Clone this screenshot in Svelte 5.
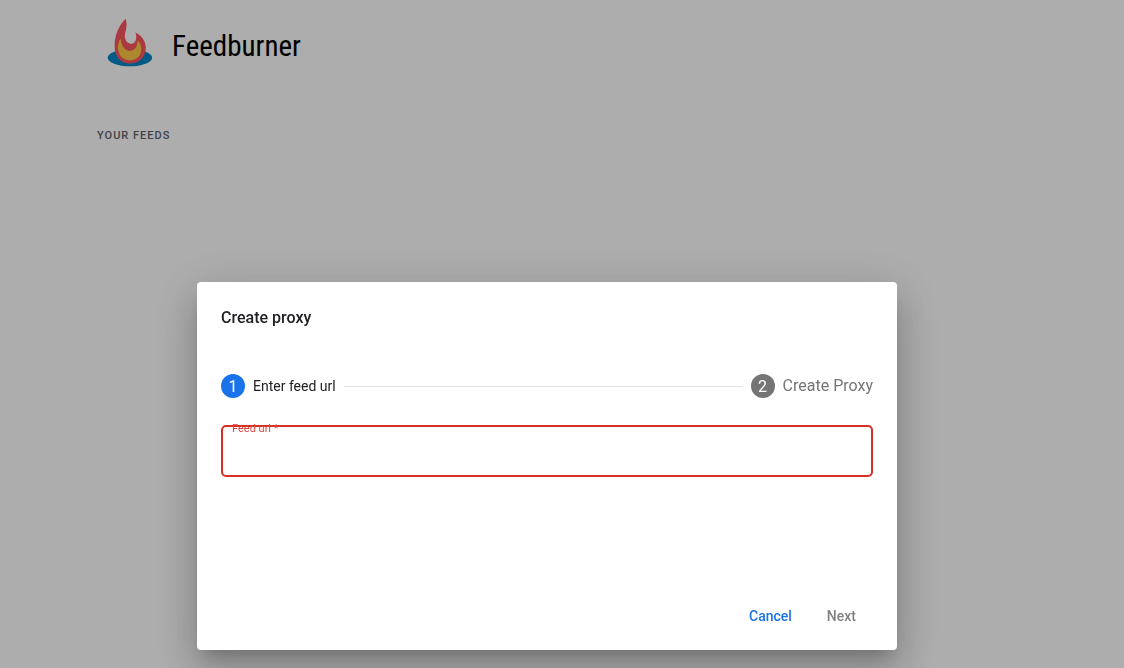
<script>
  let feedUrl = $state('');
  const steps = ['Enter feed url', 'Create Proxy'];
</script>

<div class="page">
  <header>
    <svg class="logo" viewBox="0 0 48 52" aria-hidden="true">
      <ellipse cx="23.9" cy="41.8" rx="22.2" ry="8.5" fill="#0086c8" />
      <path
        d="M19.7 2.8C13 9 8.6 19 8.6 30C8.6 41 15 47.6 24 47.6C33 47.6 39.8 41 39.8 32C39.8 26 37 20 29.4 16.4C31.4 22 30 27.8 24.6 27.8C20 27 17.6 22 19.4 16C21 11 20.8 7 19.7 2.8Z"
        fill="#fc5560"
      />
      <path
        d="M14.7 22.6C11.4 27 10.8 34 14.3 39.5C19 46 29 46 33.5 39.5C36.4 35 35.9 28 31.7 24.6C31.7 30.6 28.5 34.9 23.6 34.9C18.4 34.9 14.9 29 14.7 22.6Z"
        fill="#ffc648"
      />
    </svg>
    <h1>Feedburner</h1>
  </header>
  <main>
    <h2>Your feeds</h2>
  </main>
</div>

<div class="overlay">
  <form class="dialog" role="dialog" aria-modal="true" aria-labelledby="dialog-title">
    <h3 id="dialog-title">Create proxy</h3>
    <ol class="stepper">
      {#each steps as step, i}
        {#if i > 0}<li class="line" aria-hidden="true"></li>{/if}
        <li class="step" class:active={i === 0}>
          <span class="badge">{i + 1}</span>
          <span class="name">{step}</span>
        </li>
      {/each}
    </ol>
    <div class="field">
      <input id="feed-url" type="text" bind:value={feedUrl} required />
      <label for="feed-url">Feed url *</label>
    </div>
    <div class="actions">
      <button type="button" class="cancel">Cancel</button>
      <button type="button" disabled>Next</button>
    </div>
  </form>
</div>

<style>
  :global(body) {
    background: #fff;
    font-family: Roboto, sans-serif;
  }

  .page {
    padding: 16px 96px;
  }

  header {
    display: flex;
    align-items: flex-start;
    gap: 18px;
    padding-left: 10px;
  }

  .logo {
    width: 48px;
    height: 52px;
  }

  h1 {
    margin: 0;
    font: 400 29px/60px "Roboto Condensed", "Open Sans Condensed", Roboto, sans-serif;
    color: #000;
  }

  h2 {
    margin: 52px 0 0 1px;
    font-size: 11px;
    font-weight: 500;
    line-height: 16px;
    letter-spacing: 1px;
    text-transform: uppercase;
    color: #5f6368;
  }

  .overlay {
    position: fixed;
    inset: 0;
    display: flex;
    justify-content: center;
    align-items: flex-end;
    padding: 18px 30px 18px 0;
    background: rgba(0, 0, 0, 0.32);
  }

  .dialog {
    box-sizing: border-box;
    width: 100%;
    max-width: 700px;
    padding: 24px 24px 8px;
    border-radius: 4px;
    background: #fff;
    box-shadow:
      0 11px 15px -7px rgba(0, 0, 0, 0.2),
      0 24px 38px 3px rgba(0, 0, 0, 0.14),
      0 9px 46px 8px rgba(0, 0, 0, 0.12);
  }

  h3 {
    margin: 0;
    font-size: 16px;
    font-weight: 500;
    line-height: 24px;
    color: #202124;
  }

  .stepper {
    display: flex;
    align-items: center;
    gap: 8px;
    margin: 44px 0 27px;
    padding: 0;
    list-style: none;
  }

  .step {
    display: flex;
    align-items: center;
    gap: 8px;
    font-size: 16px;
    line-height: 24px;
    color: #757575;
  }

  .step.active {
    font-size: 14px;
    color: #202124;
  }

  .badge {
    width: 24px;
    height: 24px;
    border-radius: 50%;
    background: #757575;
    color: #fff;
    font-size: 16px;
    line-height: 26px;
    text-align: center;
  }

  .active .badge {
    background: #1a73e8;
  }

  .line {
    flex: 1;
    border-top: 1px solid #e0e0e0;
  }

  .field {
    position: relative;
  }

  input {
    display: block;
    box-sizing: border-box;
    width: 100%;
    height: 52px;
    padding: 0 12px;
    border: 2px solid #d93025;
    border-radius: 5px;
    outline: none;
    font: 16px Roboto, sans-serif;
  }

  label {
    position: absolute;
    top: -4px;
    left: 11px;
    font-size: 11px;
    line-height: 16px;
    color: #dd453b;
  }

  .actions {
    display: flex;
    justify-content: flex-end;
    gap: 3px;
    margin-top: 121px;
    padding: 0 1px 8px 0;
  }

  button {
    height: 36px;
    padding: 0 16px;
    border: 0;
    background: none;
    font: 500 14px Roboto, sans-serif;
    color: #808080;
  }

  .cancel {
    color: #1a73e8;
  }
</style>
